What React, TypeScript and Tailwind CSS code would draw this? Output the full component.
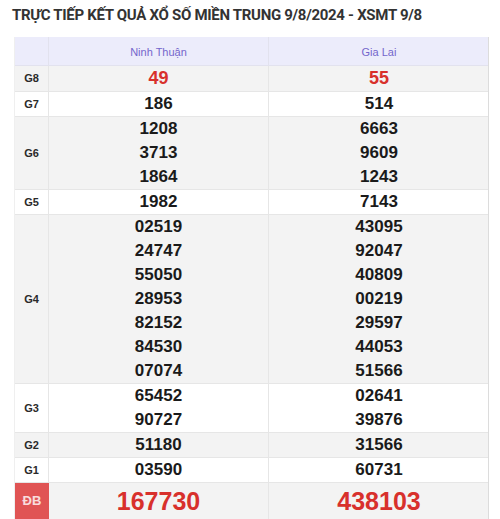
import React from "react";

type Row = { label: string; a: string[]; b: string[]; kind?: "g8" | "db" };

const rows: Row[] = [
  { label: "G8", a: ["49"], b: ["55"], kind: "g8" },
  { label: "G7", a: ["186"], b: ["514"] },
  { label: "G6", a: ["1208", "3713", "1864"], b: ["6663", "9609", "1243"] },
  { label: "G5", a: ["1982"], b: ["7143"] },
  {
    label: "G4",
    a: ["02519", "24747", "55050", "28953", "82152", "84530", "07074"],
    b: ["43095", "92047", "40809", "00219", "29597", "44053", "51566"],
  },
  { label: "G3", a: ["65452", "90727"], b: ["02641", "39876"] },
  { label: "G2", a: ["51180"], b: ["31566"] },
  { label: "G1", a: ["03590"], b: ["60731"] },
  { label: "ĐB", a: ["167730"], b: ["438103"], kind: "db" },
];

function Cell({ values, kind, last }: { values: string[]; kind?: string; last?: boolean }) {
  return (
    <div
      className={
        "flex flex-col items-center justify-center " +
        (last ? "" : "border-r border-[#e6e6e6]")
      }
    >
      {values.map((v, i) => (
        <div
          key={i}
          className={
            kind === "db"
              ? "h-[36px] leading-[36px] text-[25px] font-bold text-[#d8302c]"
              : kind === "g8"
              ? "h-[25px] leading-[25px] text-[18px] font-bold text-[#d8302c]"
              : "h-[24px] leading-[24px] text-[17px] font-bold text-[#1a1a1a]"
          }
        >
          {v}
        </div>
      ))}
    </div>
  );
}

export default function App() {
  return (
    <div className="w-[500px] h-[519px] overflow-hidden bg-white" style={{ fontFamily: '"Liberation Sans", Arial, sans-serif' }}>
      <div className="pl-[12px] pt-[6px] h-[37px]">
        <h1
          className="text-[15px] font-bold text-[#333333] leading-[18px] whitespace-nowrap tracking-[-0.3px]"
          style={{ fontFamily: 'Roboto, "Liberation Sans", sans-serif' }}
        >
          TRỰC TIẾP KẾT QUẢ XỔ SỐ MIỀN TRUNG 9/8/2024 - XSMT 9/8
        </h1>
      </div>
      <div className="ml-[14px] w-[475px] border-r border-[#dcdcdc] border-l border-l-[#efefef]">
        <div className="grid grid-cols-[34px_220px_220px] h-[29px] bg-[#ececfb] border-b border-[#e2e2ee]">
          <div className="border-r border-[#e2e2ee]" />
          <div className="flex items-center justify-center pt-[2px] text-[11px] text-[#7466cc] border-r border-[#e2e2ee]">
            Ninh Thuận
          </div>
          <div className="flex items-center justify-center pt-[2px] text-[11px] text-[#7466cc]">Gia Lai</div>
        </div>
        {rows.map((r, i) => (
          <div
            key={r.label}
            className={
              "grid grid-cols-[34px_220px_220px] border-b border-[#e6e6e6] " +
              (i % 2 === 0 ? "bg-[#f3f3f3]" : "bg-white")
            }
          >
            {r.kind === "db" ? (
              <div className="relative flex items-center justify-center bg-[#e05454] text-[13px] font-bold text-white/80">
                ĐB
              </div>
            ) : (
              <div className="flex items-center justify-center border-r border-[#e6e6e6] text-[11px] font-bold text-[#2a2a2a]">
                {r.label}
              </div>
            )}
            <Cell values={r.a} kind={r.kind} />
            <Cell values={r.b} kind={r.kind} last />
          </div>
        ))}
      </div>
    </div>
  );
}
